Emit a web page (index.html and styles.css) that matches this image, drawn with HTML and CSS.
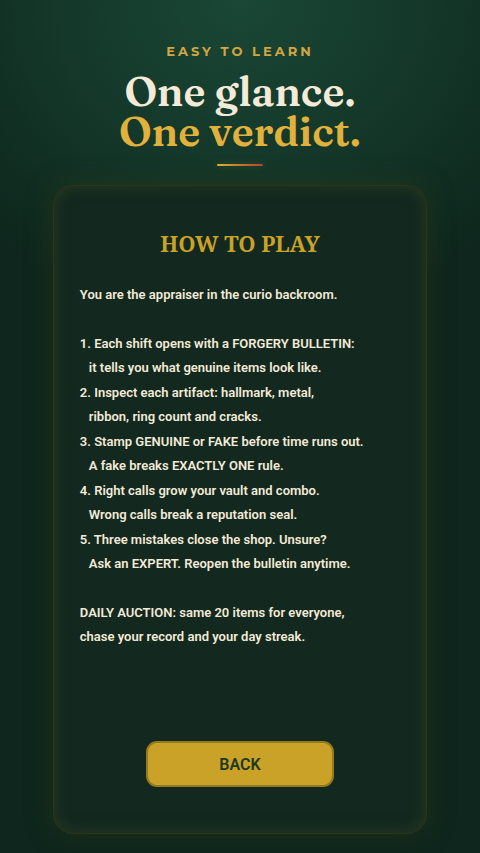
FILE: index.html
```html
<!DOCTYPE html>
<html lang="en">
<head>
<meta charset="utf-8">
<meta name="viewport" content="width=device-width, initial-scale=1">
<title>How to play</title>
<link rel="stylesheet" href="styles.css">
</head>
<body>
<main class="page">
  <header class="hero">
    <p class="eyebrow">EASY TO LEARN</p>
    <h1 class="headline">One glance.<br><span class="accent">One verdict.</span></h1>
    <div class="rule"></div>
  </header>
  <section class="card">
    <h2 class="title">HOW TO PLAY</h2>
    <div class="copy">
      <p>You are the appraiser in the curio backroom.</p>
      <div class="steps">
        <p>1. Each shift opens with a FORGERY BULLETIN:<br><span class="cont">it tells you what genuine items look like.</span></p>
        <p>2. Inspect each artifact: hallmark, metal,<br><span class="cont">ribbon, ring count and cracks.</span></p>
        <p>3. Stamp GENUINE or FAKE before time runs out.<br><span class="cont">A fake breaks EXACTLY ONE rule.</span></p>
        <p>4. Right calls grow your vault and combo.<br><span class="cont">Wrong calls break a reputation seal.</span></p>
        <p>5. Three mistakes close the shop. Unsure?<br><span class="cont">Ask an EXPERT. Reopen the bulletin anytime.</span></p>
      </div>
      <p>DAILY AUCTION: same 20 items for everyone,<br>chase your record and your day streak.</p>
    </div>
    <button class="back" type="button">BACK</button>
  </section>
</main>
</body>
</html>
```
FILE: styles.css
```css
* {
  box-sizing: border-box;
}

body,
h1,
h2,
p {
  margin: 0;
}

body {
  background: #0e261d;
  color: #f3ead8;
  font-family: Roboto, "Liberation Sans", sans-serif;
}

.page {
  display: flex;
  flex-direction: column;
  align-items: center;
  gap: 19px;
  min-height: 100vh;
  padding: 41px 11% 20px;
  background: radial-gradient(ellipse 75% 38% at 50% 0, #1a4736, #14382a 50%, #0e261d);
}

.hero {
  display: flex;
  flex-direction: column;
  align-items: center;
  text-align: center;
}

.eyebrow {
  color: #d4a540;
  font-family: Montserrat, Inter, sans-serif;
  font-size: 13px;
  font-weight: 700;
  line-height: 20px;
  letter-spacing: 3px;
}

.headline {
  margin-top: 10px;
  font-family: Fraunces, "Liberation Serif", serif;
  font-size: 41px;
  font-weight: 600;
  line-height: 40px;
}

.accent {
  color: #e2b13c;
}

.rule {
  width: 46px;
  height: 2px;
  margin-top: 13px;
  border-radius: 1px;
  background: linear-gradient(90deg, #e2b13c, #b8432c);
  box-shadow: 0 0 6px #e2b13c40;
}

.card {
  display: flex;
  flex-direction: column;
  align-items: center;
  align-self: stretch;
  padding: 39px 26px 46px;
  border: 1px solid #2f331c;
  border-radius: 20px;
  background: #13281e;
  box-shadow: 0 0 26px #2f3a1080, inset 0 0 16px #334526aa;
}

.title {
  color: #c9a227;
  font-family: "Noto Serif", "Liberation Serif", serif;
  font-size: 22px;
  font-weight: 700;
  line-height: 36px;
}

.copy {
  display: flex;
  flex-direction: column;
  align-self: stretch;
  gap: 25px;
  margin-top: 22px;
  font-size: 13px;
  font-weight: 600;
  line-height: 24px;
}

.steps {
  display: flex;
  flex-direction: column;
  gap: 1px;
}

.cont {
  padding-left: 9px;
}

.back {
  width: 188px;
  height: 46px;
  margin-top: 92px;
  border: 2px solid #94791d;
  border-radius: 11px;
  background: #c9a227;
  color: #1b3820;
  font-family: inherit;
  font-size: 16px;
  font-weight: 600;
}
```
